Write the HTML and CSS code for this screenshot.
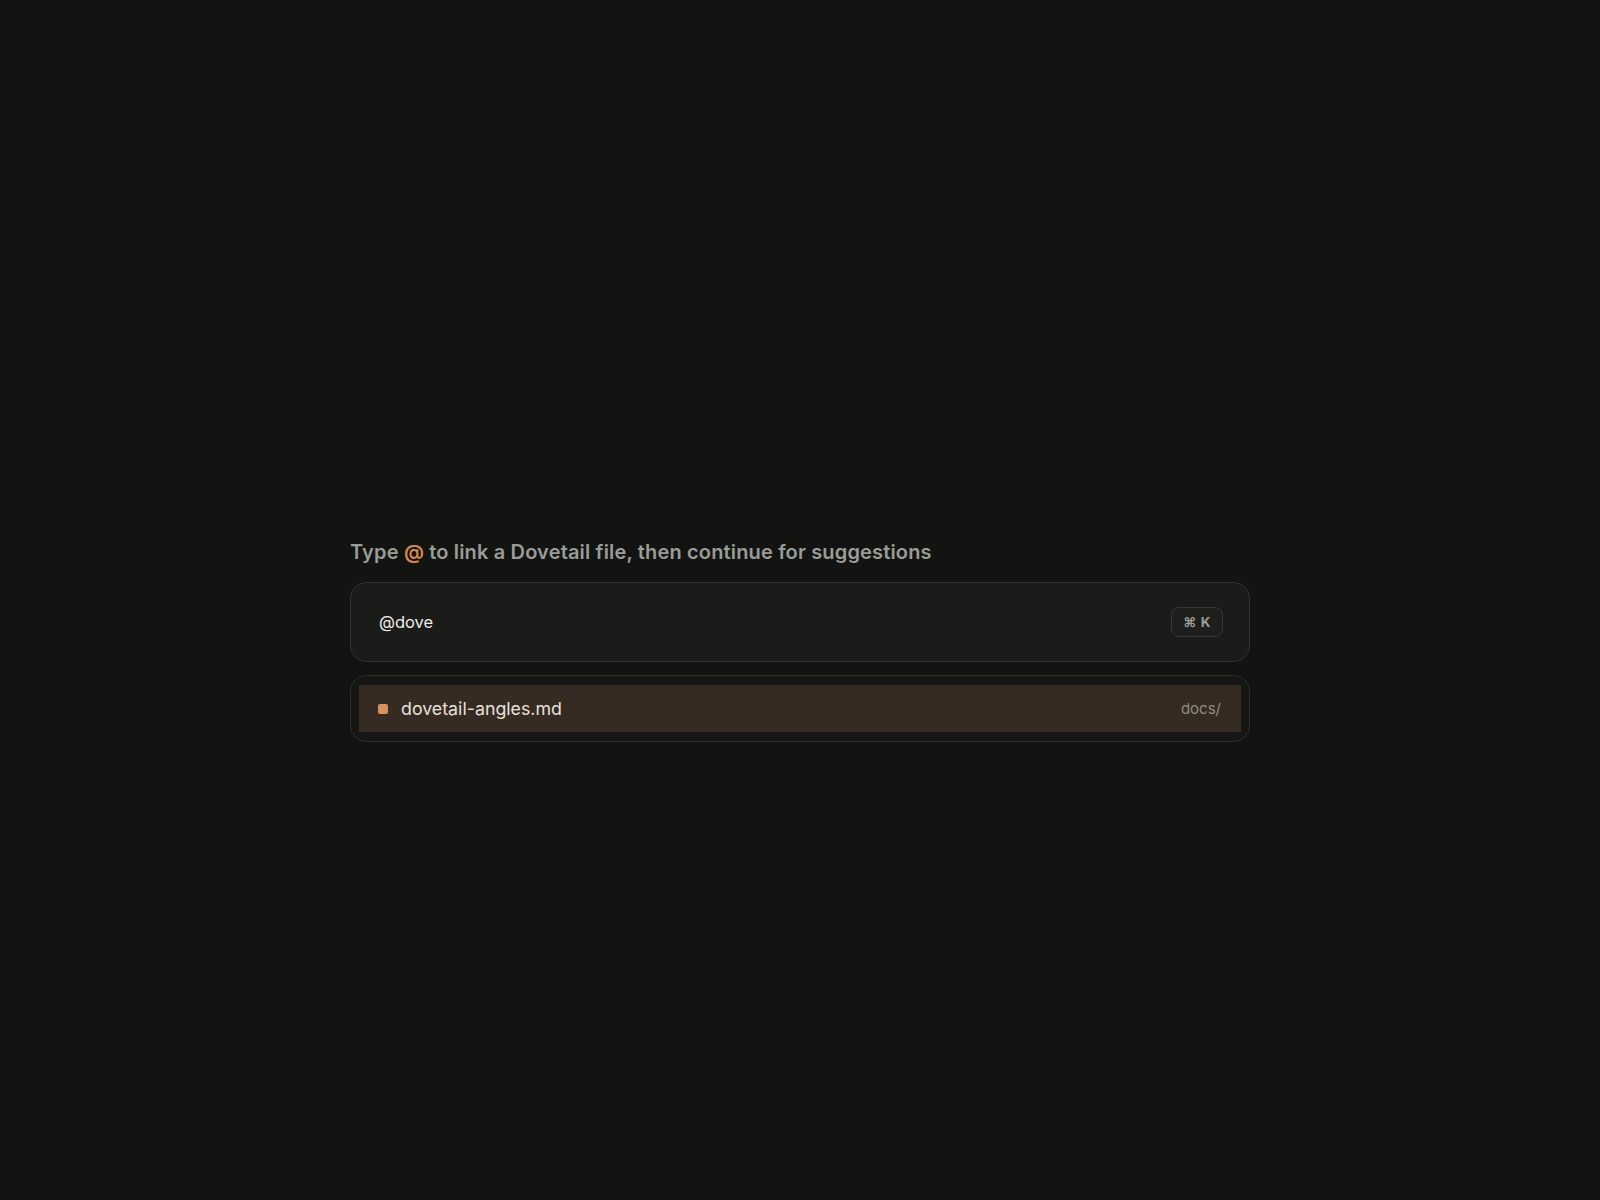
FILE: index.html
```html
<!DOCTYPE html>
<html lang="en">
<head>
<meta charset="utf-8">
<title>Dovetail link</title>
<link rel="stylesheet" href="styles.css">
</head>
<body>
<main class="stage">
  <section class="composer">
    <p class="hint">Type <span class="at">@</span> to link a Dovetail file, then continue for suggestions</p>
    <div class="input-card">
      <span class="query">@dove</span>
      <kbd class="shortcut">⌘ K</kbd>
    </div>
    <ul class="suggestions">
      <li class="suggestion active">
        <span class="dot"></span>
        <span class="name">dovetail-angles.md</span>
        <span class="path">docs/</span>
      </li>
    </ul>
  </section>
</main>
</body>
</html>
```
FILE: styles.css
```css
html, body {
  margin: 0;
  padding: 0;
  background: #121412;
  height: 100%;
}
body {
  font-family: Inter, "Noto Sans", sans-serif;
  color: #e0ddd6;
}
.stage {
  min-height: 1200px;
  display: flex;
  justify-content: center;
  padding-top: 538px;
  box-sizing: border-box;
}
.composer {
  width: 900px;
  display: flex;
  flex-direction: column;
}
.hint {
  margin: 0 0 16px 0;
  font-size: 20px;
  font-weight: 600;
  line-height: 28px;
  letter-spacing: 0.16px;
  color: #9a9c97;
}
.at {
  color: #d6894d;
}
.input-card {
  height: 80px;
  box-sizing: border-box;
  border: 1px solid #30312e;
  border-radius: 16px;
  background: #1b1c1a;
  display: flex;
  align-items: center;
  justify-content: space-between;
  padding: 0 26px 0 28px;
}
.query {
  font-size: 16.5px;
  color: #ecebe6;
}
.shortcut {
  font-family: Inter, "Noto Sans", sans-serif;
  font-size: 13.5px;
  font-weight: 700;
  color: #9b9c97;
  height: 30px;
  box-sizing: border-box;
  padding: 0 11px;
  border: 1px solid #363733;
  border-radius: 8px;
  background: #1e1f1d;
  display: flex;
  align-items: center;
  letter-spacing: 0.6px;
}
.suggestions {
  list-style: none;
  margin: 13px 0 0 0;
  padding: 9px 8px;
  border: 1px solid #2c2d2a;
  border-radius: 16px;
  background: #161715;
}
.suggestion {
  height: 47px;
  display: flex;
  align-items: center;
  padding: 0 20px 0 19px;
}
.suggestion.active {
  background: #352b22;
}
.dot {
  width: 10px;
  height: 10px;
  border-radius: 2px;
  background: #d9905a;
  margin-right: 13px;
}
.name {
  font-size: 17.8px;
  color: #e6e2da;
  flex: 1;
}
.path {
  font-size: 15px;
  color: #928c83;
}
```
